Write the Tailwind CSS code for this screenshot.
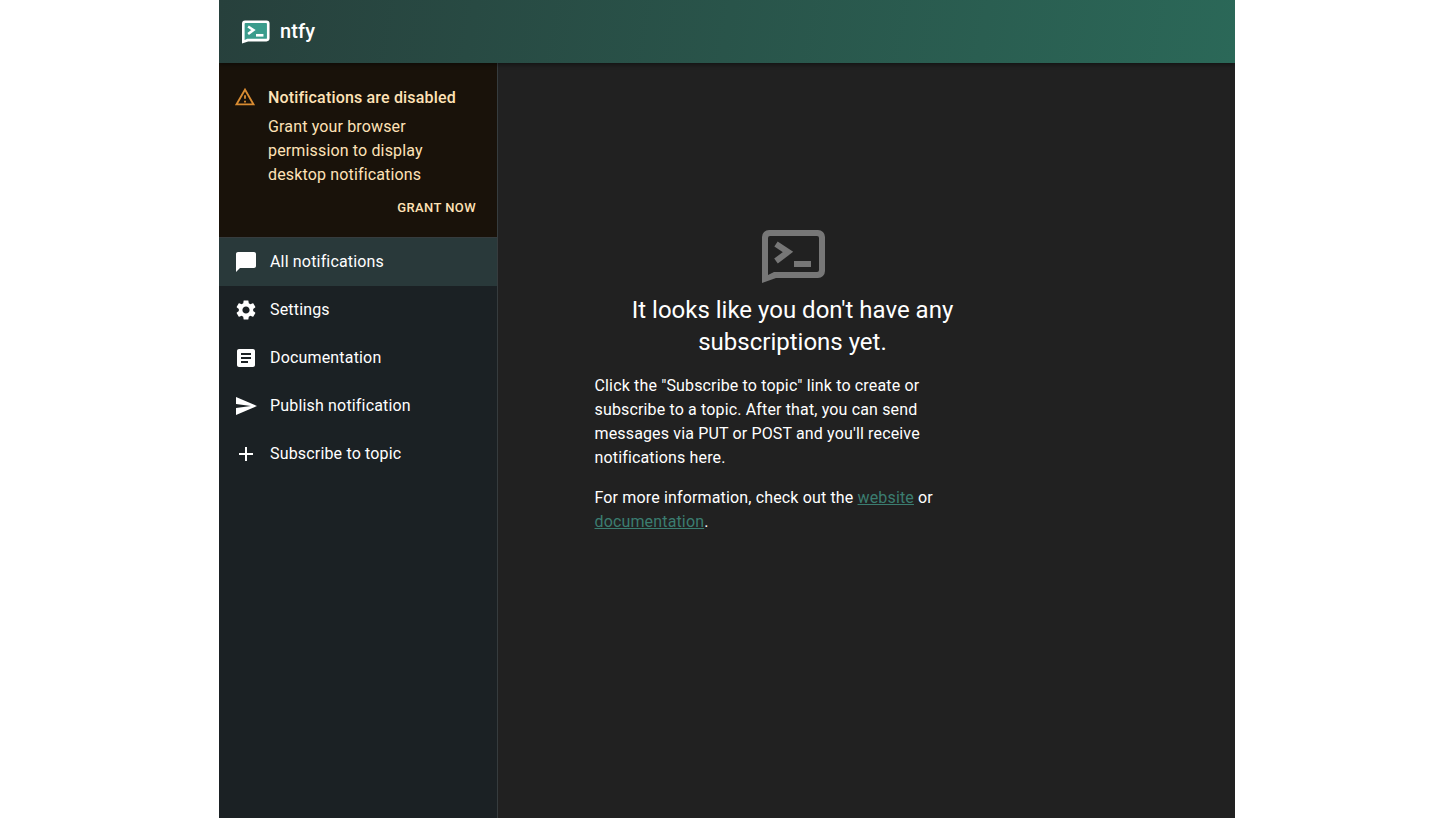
<!DOCTYPE html>
<html lang="en">
<head>
  <meta charset="UTF-8">
  <meta name="viewport" content="width=device-width, initial-scale=1.0">
  <title>ntfy</title>
  <script src="https://cdn.jsdelivr.net/npm/@tailwindcss/browser@4"></script>
</head>
<body class="bg-white font-['Roboto',sans-serif] overflow-hidden">
  <div class="w-[1016px] h-[818px] mx-auto flex flex-col bg-[#212121] text-white overflow-hidden">
    <!-- Header -->
    <header class="relative z-10 h-[63px] shrink-0 flex items-center gap-[10px] pl-[23px] bg-[linear-gradient(100deg,#27403c,#2b6858)] shadow-[0_2px_4px_rgba(0,0,0,0.4)]">
      <svg class="w-[28px] h-[24px]" viewBox="0 0 64 53">
        <path d="M3 48V7a4 4 0 0 1 4-4H56a4 4 0 0 1 4 4V41a4 4 0 0 1-4 4H13z" fill="#3a9c8c"/>
        <path fill="#fff" fill-rule="evenodd" d="M0 53V7a7 7 0 0 1 7-7H56a7 7 0 0 1 7 7V41a7 7 0 0 1-7 7H14zM6 45 12 42H55a2 2 0 0 0 2-2V8a2 2 0 0 0-2-2H8a2 2 0 0 0-2 2z"/>
        <path d="M14 14 26 22 14 31" fill="none" stroke="#fff" stroke-width="6"/>
        <rect x="32" y="31" width="17" height="6" fill="#fff"/>
      </svg>
      <span class="text-[20px] font-medium leading-[32px] tracking-[0.15px] -mt-[2px]">ntfy</span>
    </header>

    <div class="flex flex-1 min-h-0">
      <!-- Sidebar -->
      <aside class="w-[279px] shrink-0 bg-[#1b2124] border-r border-white/12 flex flex-col">
        <div class="h-[174px] shrink-0 bg-[#19120a] flex pl-[15px] pr-[21px] pt-[23px] text-[#ffe2b7]">
          <svg class="w-[22px] h-[22px] shrink-0" viewBox="0 0 24 24" fill="#d98c32">
            <path d="M12 5.99 19.53 19H4.47L12 5.99M12 2 1 21h22L12 2zm1 14h-2v2h2v-2zm0-6h-2v4h2v-4z"/>
          </svg>
          <div class="ml-[12px] flex-1">
            <div class="text-[16px] leading-[24px] font-medium mb-[5px] tracking-[0.17px]">Notifications are disabled</div>
            <div class="text-[16px] leading-[24px] w-[190px] tracking-[0.15px]">Grant your browser permission to display desktop notifications</div>
            <div class="mt-[10px] text-right text-[13px] leading-[22px] font-medium tracking-[0.4px]">GRANT NOW</div>
          </div>
        </div>
        <div class="h-px bg-white/12"></div>
        <nav class="flex flex-col text-[16px] leading-[24px] tracking-[0.17px]">
          <a class="h-[48px] flex items-center pl-[15px] bg-[#29393a]">
            <svg class="w-[24px] h-[24px] mr-[12px]" viewBox="0 0 24 24" fill="#fff"><path d="M20 2H4c-1.1 0-2 .9-2 2v18l4-4h14c1.1 0 2-.9 2-2V4c0-1.1-.9-2-2-2z"/></svg>
            All notifications
          </a>
          <a class="h-[48px] flex items-center pl-[15px]">
            <svg class="w-[24px] h-[24px] mr-[12px]" viewBox="0 0 24 24" fill="#fff"><path d="M19.14 12.94c.04-.3.06-.61.06-.94 0-.32-.02-.64-.07-.94l2.03-1.58c.18-.14.23-.41.12-.61l-1.92-3.32c-.12-.22-.37-.29-.59-.22l-2.39.96c-.5-.38-1.03-.7-1.62-.94l-.36-2.54c-.04-.24-.24-.41-.48-.41h-3.84c-.24 0-.43.17-.47.41l-.36 2.54c-.59.24-1.13.57-1.62.94l-2.39-.96c-.22-.08-.47 0-.59.22L2.74 8.87c-.12.21-.08.47.12.61l2.03 1.58c-.05.3-.09.63-.09.94s.02.64.07.94l-2.03 1.58c-.18.14-.23.41-.12.61l1.92 3.32c.12.22.37.29.59.22l2.39-.96c.5.38 1.03.7 1.62.94l.36 2.54c.05.24.24.41.48.41h3.84c.24 0 .44-.17.47-.41l.36-2.54c.59-.24 1.13-.56 1.62-.94l2.39.96c.22.08.47 0 .59-.22l1.92-3.32c.12-.22.07-.47-.12-.61l-2.01-1.58zM12 15.6c-1.98 0-3.6-1.62-3.6-3.6s1.62-3.6 3.6-3.6 3.6 1.62 3.6 3.6-1.62 3.6-3.6 3.6z"/></svg>
            Settings
          </a>
          <a class="h-[48px] flex items-center pl-[15px]">
            <svg class="w-[24px] h-[24px] mr-[12px]" viewBox="0 0 24 24" fill="#fff"><path d="M19 3H5c-1.1 0-2 .9-2 2v14c0 1.1.9 2 2 2h14c1.1 0 2-.9 2-2V5c0-1.1-.9-2-2-2zm-5 14H7v-2h7v2zm3-4H7v-2h10v2zm0-4H7V7h10v2z"/></svg>
            Documentation
          </a>
          <a class="h-[48px] flex items-center pl-[15px]">
            <svg class="w-[24px] h-[24px] mr-[12px]" viewBox="0 0 24 24" fill="#fff"><path d="M2.01 21 23 12 2.01 3 2 10l15 2-15 2z"/></svg>
            Publish notification
          </a>
          <a class="h-[48px] flex items-center pl-[15px]">
            <svg class="w-[24px] h-[24px] mr-[12px]" viewBox="0 0 24 24" fill="#fff"><path d="M19 13h-6v6h-2v-6H5v-2h6V5h2v6h6v2z"/></svg>
            Subscribe to topic
          </a>
        </nav>
      </aside>

      <!-- Main -->
      <main class="flex-1 pl-[96.5px] pt-[167px]">
        <div class="w-[396px]">
          <svg class="w-[64px] h-[53px] ml-[167.5px]" viewBox="0 0 64 53">
            <path fill="#777" fill-rule="evenodd" d="M0 53V7a7 7 0 0 1 7-7H56a7 7 0 0 1 7 7V41a7 7 0 0 1-7 7H14zM6 45 12 42H55a2 2 0 0 0 2-2V8a2 2 0 0 0-2-2H8a2 2 0 0 0-2 2z"/>
            <path d="M14 14 26 22 14 31" fill="none" stroke="#777" stroke-width="6"/>
            <rect x="32" y="31" width="17" height="6" fill="#777"/>
          </svg>
          <h2 class="mt-[11px] text-[24px] leading-[32px] text-center px-[30px]">It looks like you don't have any subscriptions yet.</h2>
          <p class="mt-[16px] text-[16px] leading-[24px] w-[345px] tracking-[0.15px]">Click the "Subscribe to topic" link to create or subscribe to a topic. After that, you can send messages via PUT or POST and you'll receive notifications here.</p>
          <p class="mt-[16px] text-[16px] leading-[24px] w-[345px] tracking-[0.15px]">For more information, check out the <a class="text-[#3b7d70] underline">website</a> or <a class="text-[#3b7d70] underline">documentation</a>.</p>
        </div>
      </main>
    </div>
  </div>
</body>
</html>
